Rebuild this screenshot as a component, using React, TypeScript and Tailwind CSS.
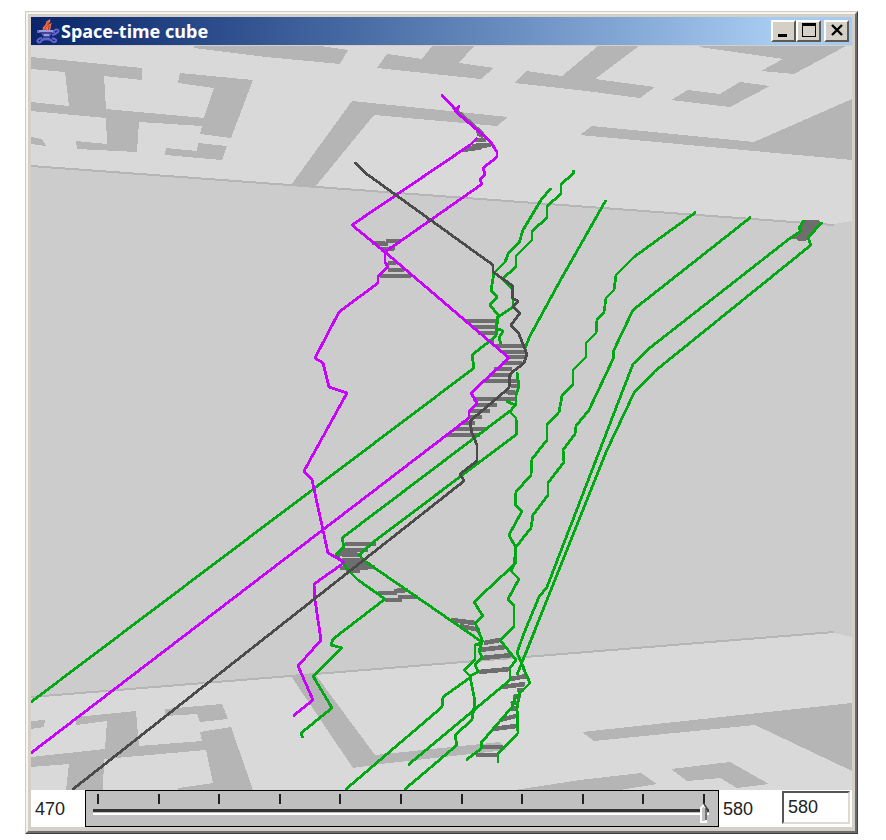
import { useState } from "react";

const FLOORS = [
  // upper map
  "31,57 72,61 142,68 142,80 104,76 106,109 138,112 204,118 214,88 178,83 180,73 253,80 231,138 200,134 202,126 139,122 137,152 77,149 76,141 107,144 106,118 31,111 31,102 69,106 65,72 31,69",
  "31,137 42,139 46,146 31,144",
  "166,148 197,151 198,143 227,146 222,160 165,155",
  "194,46 320,46 348,50 340,64 266,57 194,48",
  "387,54 422,59 432,46 474,46 459,63 494,68 481,79 377,68",
  "526,71 562,76 598,46 639,46 595,79 655,87 640,98 586,91 514,83",
  "352,101 508,117 497,126 374,115 315,187 291,185",
  "700,46 846,46 794,74 761,71 783,59 700,47",
  "688,90 720,94 740,82 770,86 730,107 671,100",
  "592,126 754,142 852,99 852,160 580,135",
  // lower map
  "31,721 45,720 44,727 31,729",
  "76,717 136,711 139,746 202,741 200,732 231,727 253,790 178,790 178,788 213,783 206,750 104,759 103,790 66,790 69,764 31,767 31,757 105,749 107,721 76,725",
  "165,709 222,704 228,719 200,722 197,714 165,716",
  "291,676 315,674 375,755 500,742 506,750 380,764 353,768",
  "582,732 852,703 852,771 755,725 594,741",
  "671,769 730,762 769,784 737,788 720,778 687,781",
  "515,790 580,780 641,773 657,784 620,790",
];

const LINKS = [
  [479, 134, 483, 136], [475, 140, 486, 140], [463, 150, 482, 147], [472, 146, 491, 145],
  [372, 243, 388, 244], [386, 241, 401, 241], [381, 250, 395, 248], [388, 263, 396, 263],
  [388, 270, 404, 270], [380, 276, 411, 276], [466, 321, 497, 321], [472, 327, 496, 327],
  [478, 333, 495, 333], [487, 341, 494, 341], [495, 346, 527, 346], [502, 352, 527, 352],
  [507, 357, 527, 357], [502, 363, 522, 363], [494, 369, 512, 369], [489, 375, 512, 375],
  [483, 381, 508, 381], [511, 381, 518, 381], [511, 386, 519, 386], [506, 392, 517, 393],
  [473, 399, 516, 399], [475, 405, 497, 405], [470, 411, 490, 411], [468, 417, 482, 417],
  [461, 423, 475, 423], [455, 429, 486, 429], [446, 435, 480, 435],
  [345, 544, 376, 544], [340, 550, 368, 550], [337, 554, 362, 555], [342, 560, 362, 560],
  [345, 564, 370, 564], [340, 568, 375, 567], [346, 571, 360, 571],
  [378, 593, 397, 593], [394, 591, 408, 590], [385, 600, 402, 600], [398, 597, 418, 597],
  [451, 620, 475, 623], [460, 626, 480, 630], [484, 643, 500, 640], [478, 650, 506, 647],
  [482, 658, 512, 655], [479, 672, 510, 669], [510, 679, 527, 676], [502, 687, 525, 684],
  [517, 690, 524, 690], [513, 697, 521, 696], [511, 704, 517, 702], [510, 709, 517, 708],
  [500, 720, 516, 716], [492, 729, 517, 726], [482, 747, 503, 747], [476, 755, 497, 755],
];

const GREEN = [
  "551,188 541,200 523,230 519,243 509,252 505,262 494,273 491,290 497,297 490,305 498,315 497,325 496,336 472,355 474,368 31,702",
  "574,170 573,174 561,184 561,194 547,206 547,218 532,231 532,240 516,256 516,267 502,279 513,290 513,307 498,317 496,328 503,331 499,338 501,344",
  "517,372 519,386 516,395 516,405 510,411 342,538 344,547 336,554 350,572 358,580 385,599 333,639 331,645 342,648 313,676 332,708 301,733 303,738",
  "606,200 560,281 530,336 525,348",
  "506,401 515,405 510,412 516,418 517,434 376,540 359,555 366,562 482,642 477,645",
  "696,212 634,257 616,275 614,290 606,298 604,312 597,320 596,333 586,343 586,357 573,370 573,384 562,396 559,412 547,425 547,440 532,459 531,475 516,492 515,505 522,511 509,535 516,548 516,563 474,602 483,616 475,623 483,642",
  "751,217 633,310 613,352 614,357 589,410 576,426 575,434 563,450 564,462 548,483 548,495 533,515 531,528 516,547 514,565 511,571 519,579 508,599 514,606 514,627 500,640",
  "500,640 516,660 510,668 510,680 408,765",
  "789,239 651,347 633,364 547,587 539,597 524,633 517,653 524,668",
  "822,222 808,238 811,245 655,371 634,393 607,450 525,655 517,675",
  "804,220 799,228 801,231 789,239",
  "522,665 530,683 515,698 512,707 481,743 482,748 466,760",
  "520,691 517,708 518,733 498,754 498,763",
  "483,642 475,645 475,660 464,670 471,677 443,697 442,707 345,790",
  "482,643 479,650 482,658 475,664 478,672 470,676 475,702 472,720 455,735 457,745 404,790",
];

const MAGENTA = [
  "441,95 450,103 456,111 459,106 455,111 490,141 497,152 497,157 483,168 485,174 480,180 482,184 385,252 385,262 388,267 378,276 378,283 339,312 315,358 323,363 329,387 347,393 304,471 312,480 328,553 344,562 341,565 314,584 315,600 321,640 298,666 313,700 293,716",
  "477,138 470,145 352,225 385,252 509,358 471,393 477,403 469,412 469,418 31,753",
];

const DARK =
  "355,162 364,172 493,265 493,272 513,286 512,298 518,301 513,307 520,313 511,325 519,334 524,347 527,354 524,363 510,374 509,388 470,421 472,433 477,445 477,461 460,474 464,481 72,790";

function Scene() {
  return (
    <svg viewBox="31 46 821 744" className="block h-auto w-full" shapeRendering="crispEdges" role="img" aria-label="Space-time cube">
      <rect x="31" y="46" width="821" height="744" fill="#cccccc" />
      <polygon points="31,46 852,46 852,221 834,224 31,166" fill="#d9d9d9" />
      <polygon points="31,697 834,633 852,637 852,790 31,790" fill="#d9d9d9" />
      <g fill="none" stroke="#b5b5b5" strokeWidth="2">
        <path d="M31 166 834 225" />
        <path d="M31 697 834 632" />
      </g>
      <g fill="#b5b5b5">
        {FLOORS.map((p) => (
          <polygon key={p} points={p} />
        ))}
      </g>
      <g fill="#6e6e6e">
        <polygon points="804,220 818,220 822,223 810,234 806,241 798,241 796,239 788,239 801,230 799,227" />
        <polygon points="447,102 452,104 478,127 484,133 483,138 477,136 476,130 464,121" />
      </g>
      <g stroke="#6e6e6e" strokeWidth="4.6">
        {LINKS.map(([x1, y1, x2, y2]) => (
          <line key={`${x1}-${y1}`} x1={x1} y1={y1} x2={x2} y2={y2} />
        ))}
      </g>
      <g fill="none" strokeWidth="2.8" strokeLinejoin="round">
        <g stroke="#00a814">
          {GREEN.map((p) => (
            <polyline key={p} points={p} />
          ))}
        </g>
        <g stroke="#c800ff">
          {MAGENTA.map((p) => (
            <polyline key={p} points={p} />
          ))}
        </g>
        <polyline points={DARK} stroke="#4b4b4b" />
      </g>
    </svg>
  );
}

function CupIcon() {
  return (
    <svg viewBox="0 0 26 26" className="h-[26px] w-[26px] shrink-0" aria-hidden="true" fill="none">
      <path d="M10 13C6 9 12 8 12 5c0-2 3-3 4-4 1 3-1 4-2 6 1-1 3-2 4-2-2 3 0 5-3 8z" fill="#f2734a" />
      <path d="M11 12c-1-3 4-4 3-8M14 13c0-3 2-4 1-6" stroke="#a8321e" strokeWidth="1" />
      <path d="M3 12h18v3h-3l-2 3v3H9v-3l-2-3H3z" fill="#6264c8" />
      <path d="M5 13h14M10 17h5" stroke="#d0d2f8" strokeWidth="1" />
      <path d="M6 15h12M9 19h7" stroke="#272667" strokeWidth="1" />
      <path d="M20 13c2-3 6-1 4 1s-3 3-6 3M8 20c-3 0-6 3-4 4s3 0 4-2c2-1 7-1 9 0 1 2 4 3 5 1s-2-2-4-3" stroke="#6264d0" strokeWidth="2" />
    </svg>
  );
}

const BUTTON =
  "flex h-[22px] w-[25px] items-center justify-center border-2 border-t-white border-l-white border-r-[#5c5a56] border-b-[#5c5a56] bg-[#d4d0c8] text-black";

function TitleBar() {
  return (
    <header className="flex h-7 items-center bg-linear-to-r from-[#0a246a] to-[#a6caf0] to-90% pr-[3px] pl-[3px]">
      <CupIcon />
      <h1 className="ml-px flex-1 pb-px font-['Noto_Sans',sans-serif] text-[18px] leading-6 font-bold whitespace-nowrap text-white">Space-time cube</h1>
      <button type="button" aria-label="Minimize" className={BUTTON}>
        <svg viewBox="0 0 20 18" className="h-[18px] w-5" shapeRendering="crispEdges">
          <path d="M4 12h9v3H4z" fill="currentColor" />
        </svg>
      </button>
      <button type="button" aria-label="Maximize" className={BUTTON}>
        <svg viewBox="0 0 20 18" className="h-[18px] w-5" shapeRendering="crispEdges">
          <path d="M3 1h14v14H3zM4 4v10h12V4z" fillRule="evenodd" fill="currentColor" />
        </svg>
      </button>
      <button type="button" aria-label="Close" className={`${BUTTON} ml-[3px]`}>
        <svg viewBox="0 0 20 18" className="h-[18px] w-5">
          <path d="M5 3l10 10M15 3 5 13" stroke="currentColor" strokeWidth="2.4" />
        </svg>
      </button>
    </header>
  );
}

const MIN = 470;
const MAX = 580;
const TICKS = [470, 481, 492, 503, 514, 525, 536, 547, 558, 569, 580];

export default function App() {
  const [time, setTime] = useState(MAX);
  const [text, setText] = useState(String(MAX));

  const change = (value: string) => {
    setText(value);
    const n = Number(value);
    if (n >= MIN && n <= MAX) setTime(n);
  };

  return (
    <main className="bg-white pt-[11px] pr-7 pb-1.5 pl-[25px] font-['Liberation_Sans',Arial,sans-serif]">
      <div className="border border-t-[#cfccc4] border-r-[#404040] border-b-[#404040] border-l-[#cfccc4]">
        <div className="border-2 border-t-[#f6f4ef] border-r-[#6c6c6c] border-b-[#6c6c6c] border-l-[#f6f4ef] bg-[#d4d0c8] p-[3px] pb-1">
          <TitleBar />
          <div className="mt-px">
            <Scene />
          </div>
          <div className="flex h-[37px] bg-white text-[18px] leading-6 text-[#222]">
            <label htmlFor="time" className="flex w-[54px] items-center pl-1">
              {MIN}
            </label>
            <div className="relative min-w-0 flex-1 border border-black bg-[#c0c0c0] pt-[3px] pr-[9px] pl-[7px]">
              <div className="flex justify-between px-1">
                {TICKS.map((t) => (
                  <span key={t} className="h-2.5 w-0.5 bg-[#222]" />
                ))}
              </div>
              <input
                id="time"
                type="range"
                min={MIN}
                max={MAX}
                value={time}
                onChange={(e) => change(e.target.value)}
                className="mt-0.5 block h-3 w-full appearance-none bg-transparent outline-none [&::-webkit-slider-runnable-track]:h-1.5 [&::-webkit-slider-runnable-track]:border-t-3 [&::-webkit-slider-runnable-track]:border-b-2 [&::-webkit-slider-runnable-track]:border-t-[#333] [&::-webkit-slider-runnable-track]:border-b-white [&::-webkit-slider-thumb]:h-3 [&::-webkit-slider-thumb]:w-2.5 [&::-webkit-slider-thumb]:appearance-none [&::-webkit-slider-thumb]:bg-transparent"
              />
              <div className="pointer-events-none absolute top-3 right-3.5 left-3">
                <svg
                  viewBox="0 0 10 21"
                  className="absolute h-[21px] w-2.5 -translate-x-1/2"
                  style={{ left: `${((time - MIN) / (MAX - MIN)) * 100}%` }}
                  aria-hidden="true"
                >
                  <path d="M5 2 2 5v14h5V5z" fill="#c0c0c0" stroke="#fff" strokeWidth="2" />
                  <path d="M5 1 9 7M7 5v12M9 6v3" stroke="#444" strokeWidth="1.5" />
                </svg>
              </div>
            </div>
            <label htmlFor="value" className="flex w-[63px] items-center pl-1">
              {MAX}
            </label>
            <input
              id="value"
              type="text"
              value={text}
              onChange={(e) => change(e.target.value)}
              className="mt-px mr-0.5 h-[33px] w-[68px] border-2 border-t-[#555] border-r-[#dedad2] border-b-[#dedad2] border-l-[#555] bg-white pl-1 outline-none"
            />
          </div>
        </div>
      </div>
    </main>
  );
}
